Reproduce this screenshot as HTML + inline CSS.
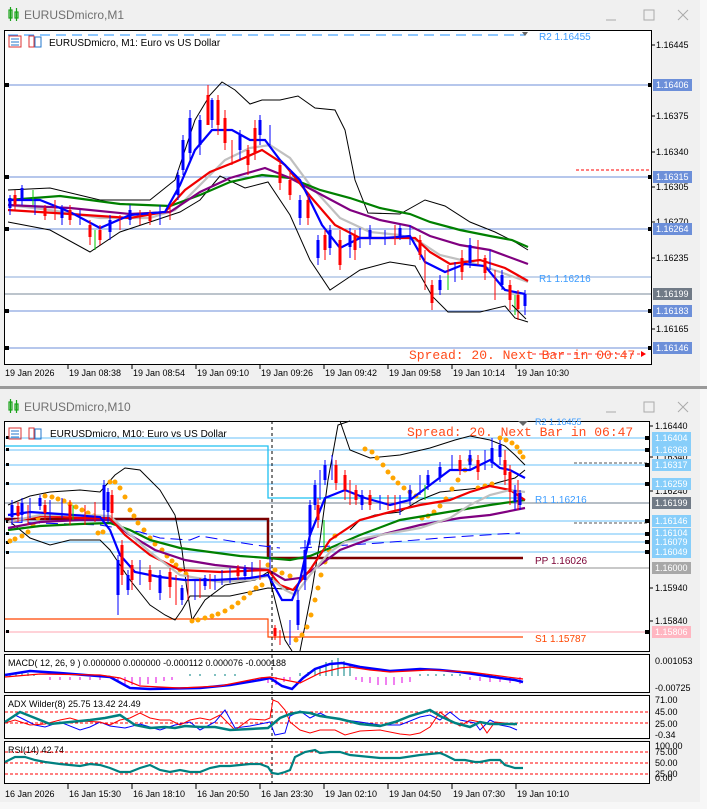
<!DOCTYPE html>
<html><head><meta charset="utf-8"><style>
html,body{margin:0;padding:0;width:707px;height:809px;overflow:hidden;background:#f0f0f0;font-family:"Liberation Sans",sans-serif}
svg{position:absolute;left:0;top:0}
</style></head><body>
<svg width="707" height="809" viewBox="0 0 707 809" xmlns="http://www.w3.org/2000/svg" font-family="Liberation Sans, sans-serif">
<rect x="0" y="0" width="707" height="809" fill="#f0f0f0"/>
<rect x="700" y="0" width="7" height="809" fill="#f7f7f7"/>
<rect x="0" y="386" width="707" height="3" fill="#9a9a9a"/>
<rect x="0" y="802" width="707" height="7" fill="#f7f7f7"/>
<!-- window title 1 -->
<g stroke="#1aa31a" fill="none" stroke-width="1.2"><rect x="9" y="10" width="3" height="8"/><line x1="10.5" y1="7" x2="10.5" y2="21"/><rect x="15" y="12" width="3" height="6"/><line x1="16.5" y1="8" x2="16.5" y2="21"/></g>
<text x="24" y="19" font-size="12" fill="#707070">EURUSDmicro,M1</text>
<line x1="606" y1="20" x2="616" y2="20" stroke="#aaa"/>
<rect x="644" y="10" width="10" height="10" fill="none" stroke="#aaa"/>
<path d="M678 10l10 10M688 10l-10 10" stroke="#aaa"/>
<!-- chart 1 -->
<rect x="4.5" y="30.5" width="647" height="334" fill="#fff" stroke="#000"/>
<g font-size="9" fill="#000">
<text x="656" y="48">1.16445</text><text x="656" y="119">1.16375</text><text x="656" y="155">1.16340</text><text x="656" y="190">1.16305</text><text x="656" y="225">1.16270</text><text x="656" y="261">1.16235</text><text x="656" y="332">1.16165</text>
</g>
<g stroke="#000"><path d="M652 45h3M652 116h3M652 152h3M652 187h3M652 222h3M652 258h3M652 329h3"/></g>
<!-- horizontal lines -->
<line x1="8" y1="35" x2="525" y2="35" stroke="#1e90ff" stroke-dasharray="10,6"/>
<path d="M522 32l6 0l-3 4z" fill="#666"/>
<text x="539" y="40" font-size="10" fill="#3c9cff">R2 1.16455</text>
<g stroke-width="1">
<line x1="5" y1="85" x2="651" y2="85" stroke="#6c8fd9"/>
<line x1="5" y1="177" x2="651" y2="177" stroke="#6c8fd9"/>
<line x1="5" y1="229" x2="651" y2="229" stroke="#6c8fd9"/>
<line x1="5" y1="277" x2="651" y2="277" stroke="#8aa8d8"/>
<line x1="5" y1="294" x2="651" y2="294" stroke="#7a8a9a"/>
<line x1="5" y1="311" x2="651" y2="311" stroke="#6c8fd9"/>
<line x1="5" y1="348" x2="651" y2="348" stroke="#6c8fd9"/>
</g>
<line x1="576" y1="170" x2="650" y2="170" stroke="#f00" stroke-dasharray="3,2"/>
<g fill="#000"><rect x="5" y="83" width="4" height="4"/><rect x="5" y="175" width="4" height="4"/><rect x="5" y="227" width="4" height="4"/><rect x="5" y="309" width="4" height="4"/><rect x="5" y="346" width="4" height="4"/><rect x="648" y="83" width="4" height="4"/><rect x="648" y="175" width="4" height="4"/><rect x="648" y="227" width="4" height="4"/><rect x="648" y="309" width="4" height="4"/><rect x="648" y="346" width="4" height="4"/></g>
<text x="539" y="282" font-size="10" fill="#3c9cff">R1 1.16216</text>
<!-- price tags -->
<g font-size="9" fill="#fff">
<rect x="653" y="79" width="39" height="12" fill="#6c8fd9"/><text x="656" y="88">1.16406</text>
<rect x="653" y="171" width="39" height="12" fill="#6c8fd9"/><text x="656" y="180">1.16315</text>
<rect x="653" y="223" width="39" height="12" fill="#6c8fd9"/><text x="656" y="232">1.16264</text>
<rect x="653" y="288" width="39" height="12" fill="#707a86"/><text x="656" y="297">1.16199</text>
<rect x="653" y="305" width="39" height="12" fill="#6c8fd9"/><text x="656" y="314">1.16183</text>
<rect x="653" y="342" width="39" height="12" fill="#6c8fd9"/><text x="656" y="351">1.16146</text>
</g>
<!-- header -->
<g><rect x="9" y="36" width="12" height="11" fill="none" stroke="#d33"/><path d="M11 39h8M11 42h8M11 45h8" stroke="#27c"/><rect x="29" y="36" width="5" height="11" fill="none" stroke="#d33"/><rect x="35" y="37" width="6" height="10" fill="none" stroke="#27c"/></g>
<text x="49" y="46" font-size="10" fill="#000">EURUSDmicro, M1:  Euro vs US Dollar</text>
<!-- bollinger -->
<g fill="none" stroke="#000" stroke-width="1">
<polyline points="8,190 50,188 100,200 150,200 175,180 195,120 210,95 222,82 235,90 250,104 262,100 280,100 298,96 315,108 335,110 345,130 355,180 368,213 400,214 425,200 445,206 470,222 495,232 515,242 528,250"/>
<polyline points="8,222 50,230 90,252 120,232 150,222 180,212 200,200 220,176 245,188 268,182 290,215 310,260 330,290 345,280 360,270 390,262 415,266 432,296 448,312 480,312 505,306 515,318 528,322"/>
</g>
<!-- MAs -->
<g fill="none" stroke-width="2.2">
<polyline stroke="#c0c0c0" points="8,205 50,210 100,218 150,218 175,210 200,185 225,160 250,148 270,145 290,158 310,185 340,218 370,232 400,235 420,242 440,255 470,262 500,272 528,282"/>
<polyline stroke="#008000" points="8,200 60,196 120,204 170,206 200,195 230,182 262,175 290,178 320,190 350,198 380,208 410,214 430,222 460,230 490,236 512,240 528,247"/>
<polyline stroke="#800080" points="8,205 70,208 130,214 170,212 200,192 230,178 265,168 290,178 320,194 350,210 380,220 410,226 430,236 460,245 490,250 528,264"/>
<polyline stroke="#f00000" points="8,210 70,214 130,218 165,212 185,190 210,172 235,162 262,150 285,165 310,196 335,225 360,238 390,238 415,238 430,252 450,264 480,260 505,268 528,281"/>
<polyline stroke="#0000ff" points="8,200 40,200 70,212 100,228 130,215 165,212 180,185 195,150 212,130 232,130 250,140 265,140 280,160 300,180 322,225 340,248 360,238 385,238 410,236 425,262 445,272 465,264 485,266 505,290 525,294"/>
</g>
<!-- candles top -->
<g stroke-width="1">
<path stroke="#00f" d="M10 195v20M22 185v20M35 200v15M62 205v20M80 210v15M110 215v25M130 205v20M160 205v20M178 170v30M183 135v40M190 110v50M200 115v40M212 98v30M240 130v30M260 115v30M270 125v20M300 195v30M318 235v30M330 225v30M350 228v30M360 228v20M370 225v20M385 230v15M400 225v15M410 225v20M440 275v20M455 262v20M470 238v30M490 250v20M502 270v20M525 290v25"/>
<path stroke="#f00" d="M15 190v20M45 205v15M55 200v20M70 205v20M90 220v25M100 225v20M120 215v15M140 210v15M150 210v15M170 205v15M208 85v40M218 95v40M225 110v40M232 140v25M248 145v30M255 120v40M280 160v30M290 170v30M308 195v30M325 230v30M340 230v40M355 230v30M395 225v20M420 235v25M425 250v40M432 280v30M448 265v25M462 250v30M478 240v25M485 255v25M495 270v30M510 280v30M518 290v30"/>
<path stroke="#0c0" d="M33 190v15M95 230v20M448 275v15M515 295v20"/>
</g>
<g stroke-width="3">
<path stroke="#00f" d="M10 198v10M22 188v12M62 208v10M110 220v12M130 210v10M178 175v20M183 140v30M190 118v35M200 120v25M212 100v20M240 135v15M260 120v15M300 200v18M318 240v18M330 230v18M350 235v12M370 230v8M400 228v8M440 280v10M470 245v18M502 275v10M525 294v12"/>
<path stroke="#f00" d="M15 195v10M45 208v8M70 210v10M90 225v12M100 230v10M150 213v8M208 95v30M218 100v25M225 118v25M248 150v15M255 128v25M280 165v18M290 180v15M308 200v18M325 235v15M340 240v25M355 235v15M420 240v15M432 285v18M462 258v14M485 258v15M510 285v15M518 295v14"/>
</g>
<path d="M512 305l14 14" stroke="#000"/>
<text x="409" y="359" font-size="13" font-family="Liberation Mono, monospace" fill="#ff4a1a">Spread: 20. Next Bar in 00:47</text>
<line x1="532" y1="354" x2="640" y2="354" stroke="#f33" stroke-dasharray="4,3"/>
<path d="M641 351l5 3l-5 3z" fill="#f00"/>
<!-- time axis 1 -->
<g stroke="#000"><path d="M68 364v5M132 364v5M196 364v5M260 364v5M324 364v5M388 364v5M452 364v5M516 364v5"/></g>
<g font-size="9" fill="#000"><text x="5" y="376">19 Jan 2026</text><text x="69" y="376">19 Jan 08:38</text><text x="133" y="376">19 Jan 08:54</text><text x="197" y="376">19 Jan 09:10</text><text x="261" y="376">19 Jan 09:26</text><text x="325" y="376">19 Jan 09:42</text><text x="389" y="376">19 Jan 09:58</text><text x="453" y="376">19 Jan 10:14</text><text x="517" y="376">19 Jan 10:30</text></g>

<!-- window 2 title -->
<g stroke="#1aa31a" fill="none" stroke-width="1.2"><rect x="9" y="402" width="3" height="8"/><line x1="10.5" y1="399" x2="10.5" y2="413"/><rect x="15" y="404" width="3" height="6"/><line x1="16.5" y1="400" x2="16.5" y2="413"/></g>
<text x="24" y="411" font-size="12" fill="#707070">EURUSDmicro,M10</text>
<line x1="606" y1="412" x2="616" y2="412" stroke="#aaa"/>
<rect x="644" y="402" width="10" height="10" fill="none" stroke="#aaa"/>
<path d="M678 402l10 10M688 402l-10 10" stroke="#aaa"/>
<!-- chart 2 frame -->
<rect x="4.5" y="421.5" width="645" height="230" fill="#fff" stroke="#000"/>
<rect x="4.5" y="654.5" width="645" height="38" fill="#fff" stroke="#000"/>
<rect x="4.5" y="695.5" width="645" height="43" fill="#fff" stroke="#000"/>
<rect x="4.5" y="741.5" width="645" height="42" fill="#fff" stroke="#000"/>
<g font-size="9" fill="#000"><text x="655" y="429">1.16440</text><text x="655" y="460">1.16340</text><text x="655" y="494">1.16240</text><text x="655" y="591">1.15940</text><text x="655" y="624">1.15840</text></g>
<g stroke="#000"><path d="M650 426h3M650 457h3M650 491h3M650 588h3M650 621h3"/></g>
<!-- lines -->
<g stroke-width="1.3">
<line x1="5" y1="438" x2="649" y2="438" stroke="#87cefa"/>
<line x1="5" y1="450" x2="649" y2="450" stroke="#87cefa"/>
<line x1="5" y1="465" x2="649" y2="465" stroke="#87cefa"/>
<line x1="5" y1="484" x2="649" y2="484" stroke="#87cefa"/>
<line x1="5" y1="503" x2="649" y2="503" stroke="#8a96a3"/>
<line x1="5" y1="521" x2="649" y2="521" stroke="#87cefa"/>
<line x1="5" y1="534" x2="649" y2="534" stroke="#87cefa"/>
<line x1="5" y1="542" x2="649" y2="542" stroke="#87cefa"/>
<line x1="5" y1="552" x2="649" y2="552" stroke="#87cefa"/>
<line x1="5" y1="568" x2="649" y2="568" stroke="#a8a8a8"/>
<line x1="5" y1="632" x2="649" y2="632" stroke="#ffb6c1"/>
</g>
<polyline points="5,446 268,446 268,498 520,498" fill="none" stroke="#1ec0f0" stroke-width="1.3"/>
<polyline points="5,519 268,519 268,558 523,558" fill="none" stroke="#7b0000" stroke-width="2.5"/>
<polyline points="5,619 268,619 268,637 523,637" fill="none" stroke="#ff4500" stroke-width="1.2"/>
<polyline points="10,522 100,525 140,532 160,538 190,540 200,536 255,545 280,548" fill="none" stroke="#0000ff" stroke-dasharray="12,6"/>
<polyline points="300,548 380,543 440,538 500,534 520,533" fill="none" stroke="#0000ff" stroke-dasharray="12,6"/>
<line x1="574" y1="463" x2="648" y2="463" stroke="#555" stroke-dasharray="3,2"/>
<line x1="574" y1="523" x2="648" y2="523" stroke="#555" stroke-dasharray="3,2"/>
<g fill="#000"><rect x="6" y="436" width="3" height="3"/><rect x="6" y="448" width="3" height="3"/><rect x="6" y="463" width="3" height="3"/><rect x="6" y="482" width="3" height="3"/><rect x="6" y="520" width="3" height="3"/><rect x="6" y="532" width="3" height="3"/><rect x="6" y="541" width="3" height="3"/><rect x="6" y="551" width="3" height="3"/><rect x="6" y="630" width="3" height="3"/>
<rect x="645" y="436" width="4" height="4"/><rect x="645" y="448" width="4" height="4"/><rect x="645" y="463" width="4" height="4"/><rect x="645" y="482" width="4" height="4"/><rect x="645" y="519" width="4" height="4"/><rect x="645" y="532" width="4" height="4"/><rect x="645" y="540" width="4" height="4"/><rect x="645" y="550" width="4" height="4"/><rect x="645" y="630" width="4" height="4"/></g>
<g font-size="9" fill="#fff">
<rect x="652" y="432" width="39" height="12" fill="#87cefa"/><text x="655" y="441">1.16404</text>
<rect x="652" y="444" width="39" height="12" fill="#87cefa"/><text x="655" y="453">1.16368</text>
<rect x="652" y="459" width="39" height="12" fill="#87cefa"/><text x="655" y="468">1.16317</text>
<rect x="652" y="478" width="39" height="12" fill="#87cefa"/><text x="655" y="487">1.16259</text>
<rect x="652" y="497" width="39" height="12" fill="#707a86"/><text x="655" y="506">1.16199</text>
<rect x="652" y="515" width="39" height="12" fill="#87cefa"/><text x="655" y="524">1.16146</text>
<rect x="652" y="528" width="39" height="10" fill="#87cefa"/><text x="655" y="536">1.16104</text>
<rect x="652" y="537" width="39" height="10" fill="#87cefa"/><text x="655" y="545">1.16079</text>
<rect x="652" y="546" width="39" height="12" fill="#87cefa"/><text x="655" y="555">1.16049</text>
<rect x="652" y="562" width="39" height="12" fill="#a8a8a8"/><text x="655" y="571">1.16000</text>
<rect x="652" y="626" width="39" height="12" fill="#ffb6c1"/><text x="655" y="635">1.15806</text>
</g>
<text x="535" y="503" font-size="10" fill="#3c9cff">R1 1.16216</text>
<text x="535" y="564" font-size="10" fill="#7b0033">PP 1.16026</text>
<text x="535" y="642" font-size="10" fill="#ff4500">S1 1.15787</text>
<!-- header 2 -->
<g><rect x="9" y="428" width="12" height="11" fill="none" stroke="#d33"/><path d="M11 431h8M11 434h8M11 437h8" stroke="#27c"/><rect x="29" y="428" width="5" height="11" fill="none" stroke="#d33"/><rect x="35" y="429" width="6" height="10" fill="none" stroke="#27c"/></g>
<text x="50" y="437" font-size="10" fill="#000">EURUSDmicro, M10:  Euro vs US Dollar</text>
<text x="407" y="436" font-size="13" font-family="Liberation Mono, monospace" fill="#ff4a1a">Spread: 20. Next Bar in 06:47</text>
<text x="535" y="425" font-size="9" fill="#3c9cff">R2 1.16455</text>
<path d="M518 421h10l-5 5z" fill="#666"/>
<!-- bollinger 2 -->
<g fill="none" stroke="#000">
<polyline points="8,505 30,496 50,492 80,490 100,492 115,475 125,468 140,470 160,490 175,515 182,550 187,590 192,620 205,600 225,585 255,580 268,572 275,600 285,640 292,651"/>
<polyline points="8,520 30,538 50,545 70,540 100,540 110,550 130,580 150,605 165,615 175,620 182,610 190,596 230,596 268,588 300,590"/>
<polyline points="300,651 312,590 320,540 328,480 338,425 350,421"/>
<polyline points="340,421 350,450 370,458 400,455 430,448 455,440 470,436 490,440 505,446 515,455 525,465"/>
<polyline points="350,530 360,520 375,515 400,512 420,500 440,492 460,490 480,488 500,482 515,478 525,470"/>
</g>
<!-- parabolic SAR dots -->
<g fill="#ffa500">
<circle cx="10" cy="541" r="2.5"/><circle cx="15" cy="539" r="2.5"/><circle cx="22" cy="536" r="2.5"/><circle cx="28" cy="532" r="2.5"/><circle cx="33" cy="525" r="2.5"/><circle cx="38" cy="518" r="2.5"/>
<circle cx="45" cy="496" r="2.5"/><circle cx="52" cy="497" r="2.5"/><circle cx="58" cy="499" r="2.5"/><circle cx="64" cy="501" r="2.5"/><circle cx="70" cy="504" r="2.5"/><circle cx="76" cy="507" r="2.5"/><circle cx="82" cy="510" r="2.5"/><circle cx="88" cy="513" r="2.5"/><circle cx="94" cy="516" r="2.5"/><circle cx="98" cy="533" r="2.5"/><circle cx="103" cy="532" r="2.5"/><circle cx="110" cy="482" r="2.5"/><circle cx="115" cy="482" r="2.5"/><circle cx="120" cy="488" r="2.5"/><circle cx="125" cy="497" r="2.5"/><circle cx="130" cy="510" r="2.5"/><circle cx="134" cy="516" r="2.5"/><circle cx="138" cy="523" r="2.5"/><circle cx="144" cy="530" r="2.5"/><circle cx="150" cy="538" r="2.5"/><circle cx="155" cy="544" r="2.5"/><circle cx="162" cy="550" r="2.5"/><circle cx="167" cy="556" r="2.5"/><circle cx="172" cy="561" r="2.5"/><circle cx="176" cy="565" r="2.5"/><circle cx="180" cy="570" r="2.5"/><circle cx="186" cy="574" r="2.5"/>
<circle cx="192" cy="621" r="2.5"/><circle cx="198" cy="620" r="2.5"/><circle cx="205" cy="618" r="2.5"/><circle cx="212" cy="616" r="2.5"/><circle cx="218" cy="614" r="2.5"/><circle cx="225" cy="611" r="2.5"/><circle cx="232" cy="607" r="2.5"/><circle cx="238" cy="603" r="2.5"/><circle cx="244" cy="598" r="2.5"/><circle cx="250" cy="593" r="2.5"/><circle cx="256" cy="588" r="2.5"/><circle cx="262" cy="585" r="2.5"/><circle cx="268" cy="565" r="2.5"/><circle cx="275" cy="570" r="2.5"/><circle cx="282" cy="573" r="2.5"/><circle cx="290" cy="576" r="2.5"/>
<circle cx="296" cy="640" r="2.5"/><circle cx="302" cy="635" r="2.5"/><circle cx="307" cy="627" r="2.5"/><circle cx="311" cy="615" r="2.5"/><circle cx="315" cy="600" r="2.5"/><circle cx="318" cy="588" r="2.5"/><circle cx="321" cy="575" r="2.5"/><circle cx="325" cy="562" r="2.5"/><circle cx="329" cy="550" r="2.5"/><circle cx="335" cy="536" r="2.5"/>
<circle cx="365" cy="449" r="2.5"/><circle cx="372" cy="452" r="2.5"/><circle cx="377" cy="458" r="2.5"/><circle cx="383" cy="465" r="2.5"/><circle cx="388" cy="472" r="2.5"/><circle cx="393" cy="478" r="2.5"/><circle cx="398" cy="483" r="2.5"/><circle cx="404" cy="488" r="2.5"/><circle cx="410" cy="492" r="2.5"/><circle cx="416" cy="496" r="2.5"/><circle cx="422" cy="518" r="2.5"/><circle cx="428" cy="516" r="2.5"/><circle cx="434" cy="512" r="2.5"/><circle cx="440" cy="506" r="2.5"/><circle cx="446" cy="499" r="2.5"/><circle cx="452" cy="489" r="2.5"/><circle cx="458" cy="480" r="2.5"/><circle cx="465" cy="470" r="2.5"/><circle cx="470" cy="460" r="2.5"/>
<circle cx="500" cy="438" r="2.5"/><circle cx="506" cy="440" r="2.5"/><circle cx="512" cy="443" r="2.5"/><circle cx="517" cy="447" r="2.5"/><circle cx="520" cy="452" r="2.5"/><circle cx="523" cy="457" r="2.5"/>
<circle cx="478" cy="488" r="2.5"/><circle cx="485" cy="486" r="2.5"/><circle cx="492" cy="484" r="2.5"/>
</g>
<!-- MAs 2 -->
<g fill="none" stroke-width="2.2">
<polyline stroke="#008000" points="8,530 40,526 80,524 110,523 130,530 150,540 180,548 210,552 240,556 268,558 290,560 310,556 330,548 360,535 400,520 430,515 460,510 490,505 525,500"/>
<polyline stroke="#800080" points="8,528 40,522 80,520 110,520 130,535 155,550 185,560 215,565 245,568 268,570 285,580 300,578 320,565 340,550 380,535 420,525 460,518 490,515 525,508"/>
<polyline stroke="#f00000" points="8,522 40,516 80,518 110,518 125,535 150,555 180,570 220,572 268,570 280,585 293,590 310,570 330,540 360,520 390,512 420,505 450,500 470,492 490,486 510,490 525,500"/>
<polyline stroke="#c0c0c0" points="8,522 40,515 80,515 110,516 125,530 150,552 180,575 220,582 250,580 268,576 285,590 295,595 310,575 330,552 345,542 380,535 420,528 450,518 470,505 490,495 510,490 525,492"/>
<polyline stroke="#0000ff" points="8,515 30,512 60,514 100,517 110,530 120,555 135,572 160,577 185,580 215,580 250,578 268,575 282,600 292,600 300,580 310,535 325,498 345,490 365,498 390,505 410,500 430,485 450,470 470,470 490,460 500,468 510,470 525,478"/>
</g>
<!-- candles 2 -->
<g stroke-width="1">
<path stroke="#00f" d="M12 500v25M22 498v25M30 498v20M40 495v15M50 500v20M62 498v20M104 480v40M108 488v35M118 555v60M128 570v25M140 560v25M160 570v30M182 585v20M195 580v20M205 575v15M215 575v15M222 570v15M230 568v15M245 565v15M252 562v15M270 545v25M290 620v25M298 590v40M305 540v50M310 500v45M315 480v30M320 470v30M325 460v25M332 455v25M362 490v20M380 495v15M400 495v20M410 485v20M420 475v20M428 470v20M440 462v20M452 455v15M470 450v20M485 450v20M492 438v30M500 440v25M515 485v25M520 490v20"/>
<path stroke="#f00" d="M18 502v20M28 505v20M45 500v20M70 500v25M85 505v20M95 502v20M112 490v30M122 540v45M132 560v30M150 565v25M170 568v30M176 575v30M188 575v25M200 578v20M210 574v15M238 565v15M260 560v20M275 625v15M280 630v15M318 498v30M336 460v30M345 470v30M350 480v25M356 485v20M370 490v20M388 495v15M395 495v15M460 455v20M478 455v25M505 450v35M510 465v40M518 480v30"/>
<path stroke="#0c0" d="M73 505v15M324 520v30M425 485v15"/>
</g>
<g stroke-width="3">
<path stroke="#00f" d="M12 505v12M22 503v12M40 498v8M104 485v25M108 492v20M118 560v35M128 575v15M160 575v18M182 588v12M205 578v8M245 568v8M298 600v25M305 550v30M310 505v30M315 485v20M325 465v15M362 495v10M410 490v10M428 475v10M440 467v10M470 455v10M492 448v15M500 445v12M515 490v12M520 493v12"/>
<path stroke="#f00" d="M18 506v10M45 505v8M70 505v12M112 495v18M122 545v30M132 565v15M150 570v12M170 572v15M238 568v8M275 628v8M318 505v15M336 465v18M345 475v15M356 490v10M370 495v10M460 460v10M478 460v12M505 460v15M510 472v20"/>
</g>
<line x1="272" y1="421" x2="272" y2="783" stroke="#000" stroke-dasharray="3,3"/>
<!-- MACD -->
<text x="8" y="666" font-size="9" fill="#000">MACD( 12, 26, 9 ) 0.000000 0.000000 -0.000112 0.000076 -0.000188</text>
<text x="655" y="664" font-size="9" fill="#000">0.001053</text>
<text x="655" y="691" font-size="9" fill="#000">-0.00725</text>
<g stroke="#008080" stroke-width="1"><path d="M10 676v-3M16 676v-2M22 676v-3M28 676v-3M34 676v-2M190 676v-2M200 676v-2M215 676v-2M225 676v-2M235 676v-2M300 676v-3M308 676v-4M315 676v-6M320 676v-10M326 676v-14M332 676v-16M338 676v-18M344 676v-15M350 676v-10M420 676v-2M428 676v-2M436 676v-2M444 676v-2M452 676v-2M460 676v-2"/></g>
<g stroke="#e000e0" stroke-width="1"><path d="M50 677v3M60 677v3M70 677v3M80 677v3M90 677v3M100 677v3M118 677v5M125 677v7M132 677v8M140 677v8M148 677v7M156 677v6M164 677v4M172 677v3M262 677v3M268 677v6M276 677v8M284 677v5M290 677v3M356 677v3M362 677v5M370 677v6M378 677v8M386 677v8M394 677v8M402 677v6M410 677v5M470 677v3M480 677v4M490 677v5M500 677v5M510 677v6M520 677v7"/></g>
<polyline fill="none" stroke="#0000ff" stroke-width="2.5" points="5,675 30,671 60,673 110,677 130,688 150,689 200,688 230,685 260,680 270,678 282,686 292,689 303,678 315,669 330,664 342,663 360,667 390,671 420,669 440,670 460,672 480,675 500,678 515,680 523,682"/>
<polyline fill="none" stroke="#f00" stroke-width="1.2" points="5,677 40,674 100,675 120,678 140,686 180,688 220,686 260,678 270,677 285,680 300,683 320,673 340,668 350,667 370,670 390,672 430,670 470,672 500,676 523,679"/>
<!-- ADX -->
<text x="8" y="707" font-size="9" fill="#000">ADX Wilder(8) 25.75 13.42 24.49</text>
<g font-size="9" fill="#000"><text x="655" y="703">71.00</text><text x="655" y="715">45.00</text><text x="655" y="727">25.00</text><text x="655" y="738">-0.34</text></g>
<g stroke="#f00" stroke-dasharray="3,2"><line x1="5" y1="712" x2="649" y2="712"/><line x1="5" y1="723" x2="649" y2="723"/></g>
<polyline fill="none" stroke="#0000ff" points="5,722 15,715 25,720 35,725 45,727 60,722 80,730 90,727 100,722 110,726 125,728 140,724 160,730 175,725 190,722 200,730 215,722 225,710 235,728 250,726 270,722 275,735 285,733 290,716 300,711 310,718 320,713 330,718 345,720 360,722 380,725 400,725 420,717 430,715 440,720 450,712 460,720 475,723 480,730 485,725 490,720 500,725 510,727 517,730"/>
<polyline fill="none" stroke="#f00" points="5,723 15,720 30,725 45,724 60,720 70,718 80,721 100,722 110,725 120,720 130,718 140,713 150,718 160,720 170,720 180,725 190,720 200,718 210,720 220,715 235,730 250,719 265,720 270,718 273,700 278,702 285,710 290,722 300,730 310,733 320,730 335,730 345,735 360,731 380,730 400,734 410,735 420,733 430,727 440,712 450,720 460,726 470,720 480,722 487,733 495,722 505,723 515,725"/>
<polyline fill="none" stroke="#008080" stroke-width="2.5" points="5,722 20,712 35,718 50,724 70,722 90,720 105,718 120,715 135,725 150,728 165,727 175,728 185,726 200,727 215,727 230,730 250,729 268,728 280,718 290,714 300,712 310,713 320,716 340,719 360,724 380,726 395,722 410,716 430,710 440,716 455,723 470,727 480,722 490,724 500,724 517,724"/>
<!-- RSI -->
<text x="8" y="753" font-size="9" fill="#000">RSI(14) 42.74</text>
<g font-size="9" fill="#000"><text x="655" y="749">100.00</text><text x="655" y="755">75.00</text><text x="655" y="766">50.00</text><text x="655" y="777">25.00</text><text x="655" y="781">0.00</text></g>
<g stroke="#f00" stroke-dasharray="3,2"><line x1="5" y1="752" x2="649" y2="752"/><line x1="5" y1="763" x2="649" y2="763"/><line x1="5" y1="774" x2="649" y2="774"/></g>
<polyline fill="none" stroke="#008080" stroke-width="2.2" points="5,762 15,757 25,757 35,760 45,762 60,764 70,765 80,766 90,764 100,765 110,768 120,772 130,772 140,768 150,765 160,770 170,772 180,770 190,772 200,772 210,768 220,766 230,766 240,765 250,764 260,764 268,767 272,773 278,774 285,772 290,770 295,757 305,752 315,750 320,753 330,752 340,752 350,755 360,756 380,758 400,758 420,755 440,753 445,755 455,760 465,760 475,762 480,762 490,760 500,760 505,765 515,768 523,768"/>
<!-- time axis 2 -->
<g stroke="#000"><path d="M68 784v5M132 784v5M196 784v5M260 784v5M324 784v5M388 784v5M452 784v5M516 784v5"/></g>
<g font-size="9" fill="#000"><text x="5" y="797">16 Jan 2026</text><text x="69" y="797">16 Jan 15:30</text><text x="133" y="797">16 Jan 18:10</text><text x="197" y="797">16 Jan 20:50</text><text x="261" y="797">16 Jan 23:30</text><text x="325" y="797">19 Jan 02:10</text><text x="389" y="797">19 Jan 04:50</text><text x="453" y="797">19 Jan 07:30</text><text x="517" y="797">19 Jan 10:10</text></g>
</svg>
</body></html>
